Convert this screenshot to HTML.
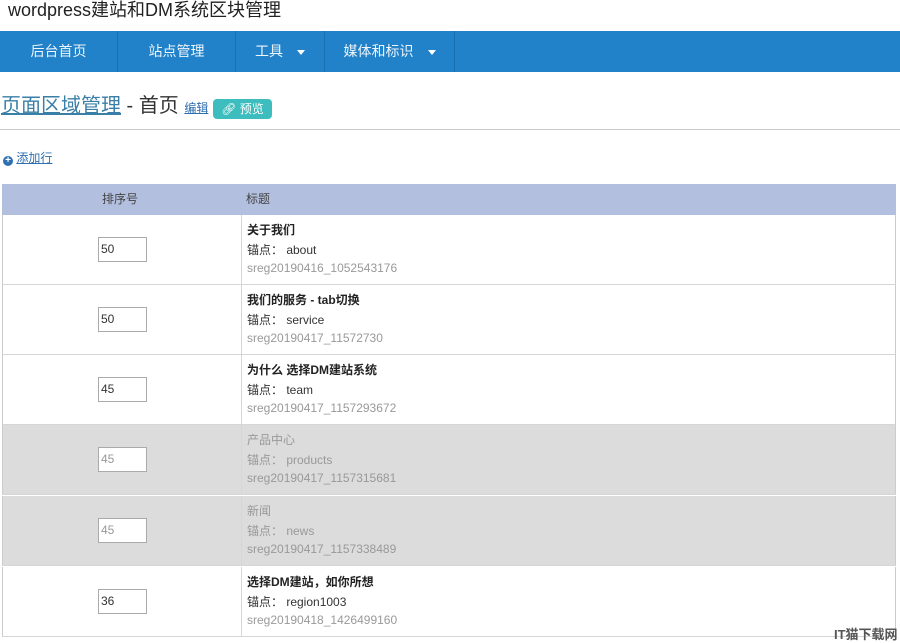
<!DOCTYPE html>
<html><head><meta charset="utf-8"><style>
*{margin:0;padding:0;box-sizing:border-box}
body{width:900px;height:640px;overflow:hidden;background:#fff;font-family:"Liberation Sans","Noto Sans CJK SC",sans-serif;position:relative;color:#333}
.a{position:absolute}
.nav{left:0;top:31px;width:900px;height:41px;background:#2181c9}
.ni{position:absolute;top:0;height:41px;line-height:41px;color:#eef5fb;font-size:14px;text-align:center;border-right:1px solid #1a6fb0}
.car{display:inline-block;width:0;height:0;border-left:4px solid transparent;border-right:4px solid transparent;border-top:5px solid #fff;margin-left:14px;vertical-align:middle}
.row{position:absolute;left:2px;width:894px;height:70px;border-bottom:1px solid #d6d6d6;border-left:1px solid #ccc;border-right:1px solid #ccc}
.row .c1{position:absolute;left:0;top:0;width:239px;height:69px;border-right:1px solid #d6d6d6}
.inp{position:absolute;left:95px;top:22px;width:49px;height:25px;border:1px solid #aaa;background:#fff;font-size:12px;line-height:23px;padding-left:2px;color:#333}
.t1{position:absolute;left:244px;top:6px;font-size:12px;font-weight:bold;color:#222}
.t2{position:absolute;left:244px;top:26px;font-size:12px;color:#333}
.t3{position:absolute;left:244px;top:46px;font-size:12px;color:#999}
.g{background:#dcdcdc}
.g .t1,.g .t2,.g .t3,.g .inp{color:#999}
.g .t1{font-weight:normal}
</style></head><body>
<div class="a" style="left:8px;top:0;font-size:18px;color:#222;line-height:20px">wordpress建站和DM系统区块管理</div>
<div class="a nav">
<div class="ni" style="left:0;width:118px">后台首页</div>
<div class="ni" style="left:118px;width:118px">站点管理</div>
<div class="ni" style="left:236px;width:89px">工具<span class="car"></span></div>
<div class="ni" style="left:325px;width:130px">媒体和标识<span class="car"></span></div>
</div>
<div class="a" style="left:1px;top:93px;font-size:20px;line-height:26px;color:#333"><span style="color:#3a7fa8;text-decoration:underline">页面区域管理</span> - 首页 <span style="font-size:12px;color:#2d6fb0;text-decoration:underline">编辑</span></div>
<div class="a" style="left:213px;top:99px;width:59px;height:20px;background:#3dbdbd;border-radius:4px;color:#fff;font-size:12px;line-height:20px;text-align:center">&#x1F517;&#xFE0E; 预览</div>
<div class="a" style="left:0;top:129px;width:900px;height:1px;background:#ccc"></div>
<div class="a" style="left:3px;top:149px;font-size:12px;color:#2d6fb0"><span style="display:inline-block;width:10px;height:10px;border-radius:50%;background:#2d6fb0;color:#fff;font-size:10px;line-height:10px;text-align:center;font-weight:bold;vertical-align:-1px">+</span> <span style="text-decoration:underline">添加行</span></div>
<div class="a" style="left:2px;top:184px;width:894px;height:31px;background:#b3bfdf;font-size:12px;color:#444;line-height:31px">
<span class="a" style="left:100px">排序号</span><span class="a" style="left:244px">标题</span></div>
<div class="row" style="top:215px"><div class="c1"></div><div class="inp">50</div><div class="t1">关于我们</div><div class="t2">锚点：&nbsp;about</div><div class="t3">sreg20190416_1052543176</div></div>
<div class="row" style="top:285px"><div class="c1"></div><div class="inp">50</div><div class="t1">我们的服务 - tab切换</div><div class="t2">锚点：&nbsp;service</div><div class="t3">sreg20190417_11572730</div></div>
<div class="row" style="top:355px"><div class="c1"></div><div class="inp">45</div><div class="t1">为什么 选择DM建站系统</div><div class="t2">锚点：&nbsp;team</div><div class="t3">sreg20190417_1157293672</div></div>
<div class="row g" style="top:425px"><div class="c1"></div><div class="inp">45</div><div class="t1">产品中心</div><div class="t2">锚点：&nbsp;products</div><div class="t3">sreg20190417_1157315681</div></div>
<div class="row g" style="top:496px"><div class="c1"></div><div class="inp">45</div><div class="t1">新闻</div><div class="t2">锚点：&nbsp;news</div><div class="t3">sreg20190417_1157338489</div></div>
<div class="row" style="top:567px"><div class="c1"></div><div class="inp">36</div><div class="t1">选择DM建站，如你所想</div><div class="t2">锚点：&nbsp;region1003</div><div class="t3">sreg20190418_1426499160</div></div>
<div class="a" style="left:834px;top:624px;font-size:13px;color:#555;font-weight:bold">IT猫下载网</div>
</body></html>
